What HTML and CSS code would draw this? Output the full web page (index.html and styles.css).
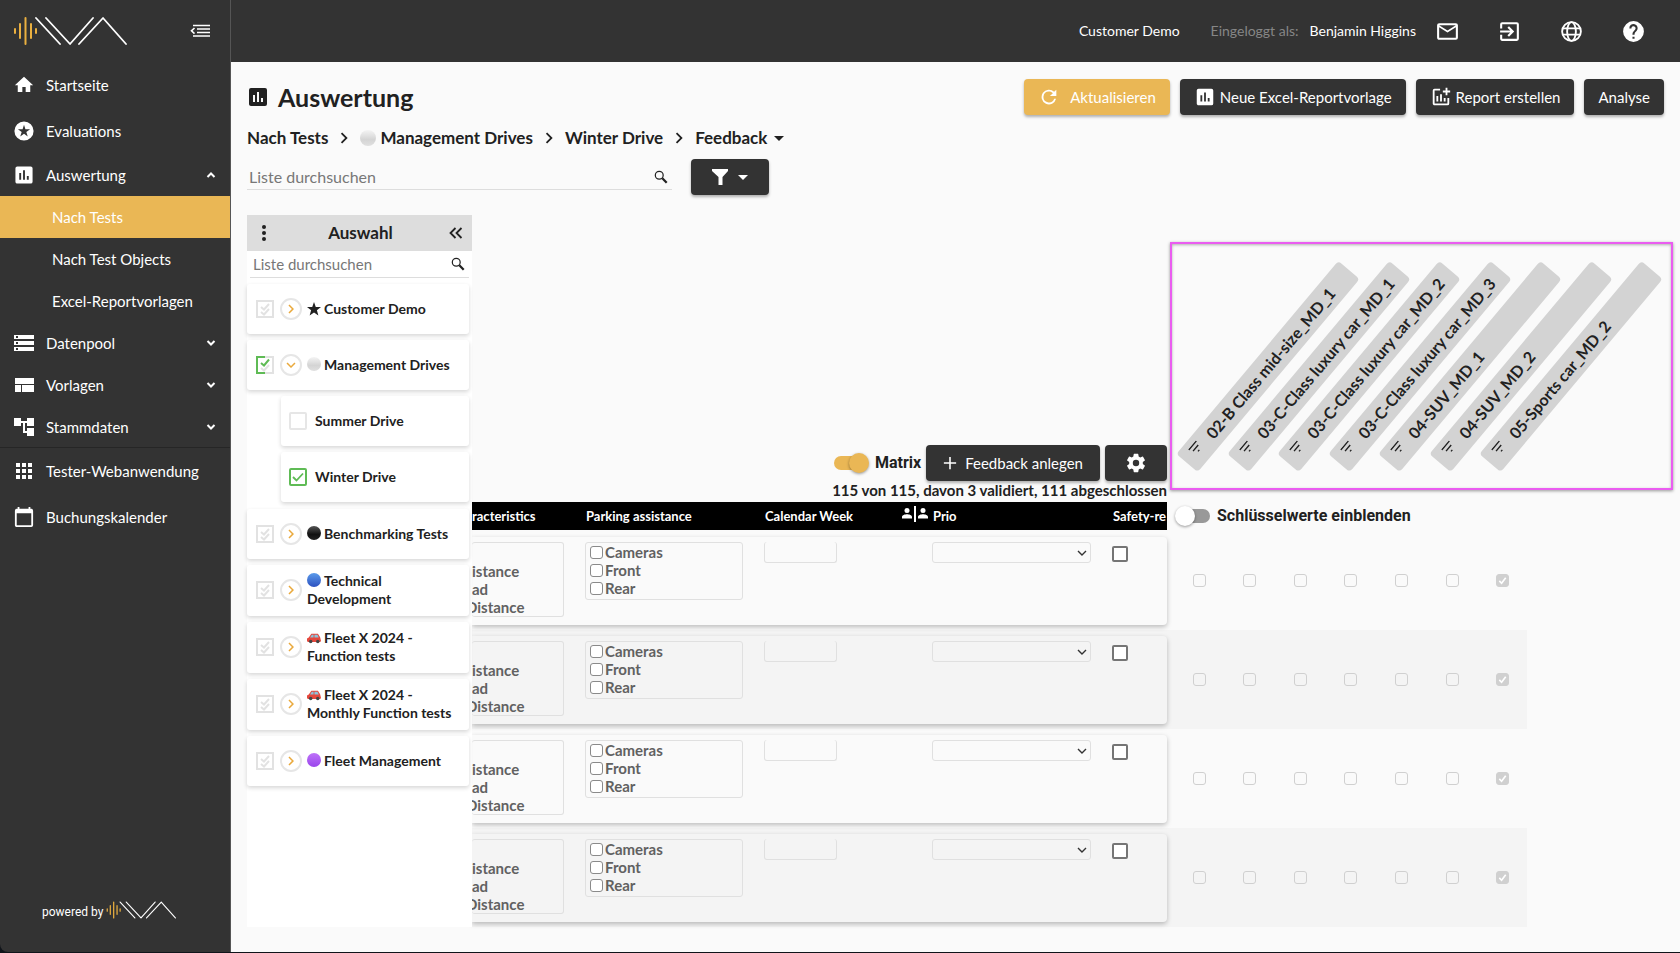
FILE: index.html
```html
<!DOCTYPE html>
<html lang="de">
<head>
<meta charset="utf-8">
<title>Auswertung</title>
<link rel="stylesheet" href="styles.css">
</head>
<body>
<svg class="defs" aria-hidden="true">
  <symbol id="logo" viewBox="0 0 114 30">
    <g fill="none" stroke="#eab040" stroke-width="2" stroke-linecap="round"><path d="M2 13v4M7 8v14M12.500 2v26M18 8v14M23 13v4"/></g>
    <g fill="none" stroke="#fff" stroke-width="1.800" stroke-linecap="round" stroke-linejoin="round"><path d="M23 2l24 26M33 2l24 26L80 2M66 28L90 2l23 26"/></g>
  </symbol>
  <symbol id="chart" viewBox="0 0 24 24"><path fill-rule="evenodd" d="M19 3H5a2 2 0 0 0-2 2v14c0 1.100.9 2 2 2h14a2 2 0 0 0 2-2V5a2 2 0 0 0-2-2zM9 17H7v-7h2zm4 0h-2V7h2zm4 0h-2v-4h2z"/></symbol>
  <symbol id="next" viewBox="0 0 24 24"><path d="M10 6L8.600 7.400 13.200 12l-4.600 4.600L10 18l6-6z"/></symbol>
  <symbol id="down" viewBox="0 0 24 24"><path d="M7.400 8.600L12 13.200l4.600-4.600L18 10l-6 6-6-6z"/></symbol>
  <symbol id="bolddown" viewBox="0 0 12 12"><path d="M2.500 4L6 7.500 9.500 4" fill="none" stroke="currentColor" stroke-width="2"/></symbol>
  <symbol id="search" viewBox="0 0 16 16"><g fill="none" stroke="currentColor"><circle cx="6" cy="6" r="4.500" stroke-width="1.400"/><path d="M9.500 9.500L14.500 14.500" stroke-width="2.600"/></g></symbol>
  <symbol id="multi" viewBox="0 0 20 20"><g fill="none" stroke="#e2e2e2" stroke-width="2"><path d="M2 2h16v16H2z"/><path d="M6 8l3 2.500L14 5M6 13l3 2.500L14 10"/></g></symbol>
  <symbol id="partial" viewBox="0 0 20 20"><g fill="none" stroke="#e2e2e2" stroke-width="2"><path d="M10 2h8v16h-8M6 13l3 2.500L14 10"/></g><g fill="none" stroke="#5fbb55" stroke-width="2"><path d="M10 2H2v16h8"/><path d="M6 8l3 2.500L14 4.500"/></g></symbol>
  <symbol id="car" viewBox="0 0 16 16"><path d="M0 8.500l2-1.200L5 3h7.500L15 7l1 4.500-1 1H1L0 11.500z" fill="#e5473c"/><path d="M5.500 4.200h2v3.300H3.500zM8.500 4.200h3.400l1.600 3.300h-5z" fill="#8cc4dc"/><circle cx="4.200" cy="12" r="2" fill="#444"/><circle cx="12.300" cy="12" r="2" fill="#444"/></symbol>
  <symbol id="sort" viewBox="0 0 12 10"><path d="M0 1h12M2 5h8M5 9h2" stroke="currentColor" stroke-width="1.400"/></symbol>
</svg>
<div class="app">
  <aside class="sidebar">
    <div class="brand">
      <svg class="logo"><use href="#logo"/></svg>
      <button class="icon-button" aria-label="Menü einklappen"><svg class="collapse" viewBox="0 0 20 14"><path d="M3 1.500h17M7 5h13M7 8.500h13M3 12h17M4.500 4L1.500 6.800l3 2.800" fill="none" stroke="currentColor" stroke-width="1.600"/></svg></button>
    </div>
    <nav>
      <a class="nav tall" href="#"><svg viewBox="0 0 24 24"><path d="M10 20.500v-6h4v6h5.500v-8.300H23L12 2 1 12.200h3.500v8.300z"/></svg>Startseite</a>
      <a class="nav tall" href="#"><svg viewBox="0 0 24 24"><path fill-rule="evenodd" d="M12 .5a11.500 11.500 0 1 0 0 23 11.500 11.500 0 0 0 0-23zm4.500 18L12 15.200l-4.500 3.300 1.700-5.300-4.500-3.300h5.600L12 4.500l1.700 5.400h5.600l-4.500 3.300z"/></svg>Evaluations</a>
      <a class="nav group" href="#"><svg viewBox="1.500 1.500 21 21"><use href="#chart" width="24" height="24"/></svg>Auswertung<svg class="arrow up"><use href="#bolddown"/></svg></a>
      <a class="nav sub active" href="#">Nach Tests</a>
      <a class="nav sub" href="#">Nach Test Objects</a>
      <a class="nav sub" href="#">Excel-Reportvorlagen</a>
      <a class="nav group" href="#"><svg viewBox="2 2 20 20"><path fill-rule="evenodd" d="M2 20h20v-4H2zm2-3h2v2H4zM2 4v4h20V4zm4 3H4V5h2zm-4 7h20v-4H2zm2-3h2v2H4z"/></svg>Datenpool<svg class="arrow"><use href="#bolddown"/></svg></a>
      <a class="nav group" href="#"><svg viewBox="2 2 20 20"><path d="M3 5h19v6H3zM3 12h6v7H3zM10 12h12v7H10z"/></svg>Vorlagen<svg class="arrow"><use href="#bolddown"/></svg></a>
      <a class="nav group last" href="#"><svg viewBox="2 2 20 20"><path d="M22 11V3h-7v3H9V3H2v8h7V8h2v10h4v3h7v-8h-7v3h-2V8h2v3z"/></svg>Stammdaten<svg class="arrow"><use href="#bolddown"/></svg></a>
      <a class="nav tall" href="#"><svg viewBox="2 2 20 20"><path d="M4 4h4v4H4zM10 4h4v4h-4zM16 4h4v4h-4zM4 10h4v4H4zM10 10h4v4h-4zM16 10h4v4h-4zM4 16h4v4H4zM10 16h4v4h-4zM16 16h4v4h-4z"/></svg>Tester-Webanwendung</a>
      <a class="nav tall" href="#"><svg viewBox="2 1 20 22"><path fill-rule="evenodd" d="M20 3h-1V1h-2v2H7V1H5v2H4a2 2 0 0 0-2 2v16c0 1.100.9 2 2 2h16a2 2 0 0 0 2-2V5a2 2 0 0 0-2-2zm0 18H4V8h16z"/></svg>Buchungskalender</a>
    </nav>
    <div class="powered">powered by <svg class="logo-small"><use href="#logo"/></svg></div>
  </aside>

  <div class="page">
    <header class="topbar">
      <span class="customer">Customer Demo</span>
      <span class="login">Eingeloggt als:</span>
      <span class="user">Benjamin Higgins</span>
      <button class="icon-button" aria-label="Nachrichten"><svg viewBox="0 0 24 24"><path fill-rule="evenodd" d="M22 6a2 2 0 0 0-2-2H4a2 2 0 0 0-2 2v12c0 1.100.9 2 2 2h16a2 2 0 0 0 2-2zm-2 0l-8 5-8-5zm0 12H4V8l8 5 8-5z"/></svg></button>
      <button class="icon-button" aria-label="Abmelden"><svg viewBox="0 0 24 24"><path d="M10 15.600L11.500 17l5-5-5-5L10 8.400l2.700 2.600H3v2h9.700zM19 3H5a2 2 0 0 0-2 2v4h2V5h14v14H5v-4H3v4c0 1.100.9 2 2 2h14a2 2 0 0 0 2-2V5a2 2 0 0 0-2-2z"/></svg></button>
      <button class="icon-button" aria-label="Sprache"><svg viewBox="0 0 24 24"><g fill="none" stroke="currentColor" stroke-width="1.800"><circle cx="12" cy="12" r="9"/><ellipse cx="12" cy="12" rx="4.200" ry="9"/><path d="M3.500 9h17M3.500 15h17"/></g></svg></button>
      <button class="icon-button" aria-label="Hilfe"><svg viewBox="0 0 24 24"><path d="M12 2a10 10 0 1 0 0 20 10 10 0 0 0 0-20zm1 17h-2v-2h2zm2.100-7.700l-.9.900C13.400 12.900 13 13.500 13 15h-2v-.5c0-1.100.4-2.100 1.200-2.800l1.200-1.300A2 2 0 1 0 10 9H8a4 4 0 1 1 7.100 2.300z"/></svg></button>
    </header>

    <main class="content">
      <div class="title-row">
        <svg class="title-icon" viewBox="3 3 18 18"><use href="#chart" width="24" height="24"/></svg>
        <h1>Auswertung</h1>
        <div class="actions">
          <button class="btn primary"><svg viewBox="0 0 24 24"><path d="M17.600 6.400A8 8 0 1 0 19.700 14h-2.100A6 6 0 1 1 12 6c1.700 0 3.100.7 4.200 1.800L13 11h7V4z"/></svg>Aktualisieren</button>
          <button class="btn"><svg viewBox="0 0 24 24"><use href="#chart"/></svg>Neue Excel-Reportvorlage</button>
          <button class="btn"><svg viewBox="0 0 24 24"><path d="M22 5v2h-3v3h-2V7h-3V5h3V2h2v3zM19 19H5V5h6V3H5a2 2 0 0 0-2 2v14c0 1.100.9 2 2 2h14a2 2 0 0 0 2-2v-6h-2zM15 17v-4h2v4zM11 17V9h2v8zM9 17H7v-6h2z"/></svg>Report erstellen</button>
          <button class="btn">Analyse</button>
        </div>
      </div>

      <nav class="crumbs">
        <a href="#">Nach Tests</a><svg><use href="#next"/></svg>
        <a href="#"><i class="dot white"></i>Management Drives</a><svg><use href="#next"/></svg>
        <a href="#">Winter Drive</a><svg><use href="#next"/></svg>
        <button class="crumb-menu">Feedback<i class="caret"></i></button>
      </nav>

      <div class="filters">
        <label class="search"><input type="text" placeholder="Liste durchsuchen" aria-label="Liste durchsuchen"><svg><use href="#search"/></svg></label>
        <button class="btn filter" aria-label="Filter"><svg viewBox="0 0 16 18"><path d="M0 1h16v2l-5.500 6v8h-4V9L0 3z"/></svg><i class="caret"></i></button>
      </div>

      <div class="work">
        <section class="panel">
          <header class="panel-head">
            <button class="icon-button" aria-label="Optionen"><svg class="dots" viewBox="0 0 4 16"><circle cx="2" cy="2" r="2"/><circle cx="2" cy="8" r="2"/><circle cx="2" cy="14" r="2"/></svg></button>
            <h2>Auswahl</h2>
            <button class="icon-button" aria-label="Einklappen"><svg class="back" viewBox="0 0 14 12"><path d="M6.500 1l-5 5 5 5M12.500 1l-5 5 5 5" fill="none" stroke="currentColor" stroke-width="1.800"/></svg></button>
          </header>
          <label class="search small"><input type="text" placeholder="Liste durchsuchen" aria-label="Auswahl durchsuchen"><svg><use href="#search"/></svg></label>
          <ul class="tree">
            <li class="node"><svg class="tick"><use href="#multi"/></svg><button class="expand" aria-label="Öffnen"><svg><use href="#next"/></svg></button><span><svg class="emoji" viewBox="0 0 16 16"><path d="M8 0l2 5.700 6 .1-4.700 3.700L13 15.300 8 12l-5 3.300 1.700-5.800L0 5.800l6-.1z"/></svg>Customer Demo</span></li>
            <li class="node"><svg class="tick"><use href="#partial"/></svg><button class="expand" aria-label="Schließen"><svg><use href="#down"/></svg></button><span><i class="dot white"></i>Management Drives</span></li>
            <li class="node child"><input class="box" type="checkbox" id="summer"><label for="summer">Summer Drive</label></li>
            <li class="node child end"><input class="box" type="checkbox" id="winter" checked><label for="winter">Winter Drive</label></li>
            <li class="node"><svg class="tick"><use href="#multi"/></svg><button class="expand" aria-label="Öffnen"><svg><use href="#next"/></svg></button><span><i class="dot black"></i>Benchmarking Tests</span></li>
            <li class="node"><svg class="tick"><use href="#multi"/></svg><button class="expand" aria-label="Öffnen"><svg><use href="#next"/></svg></button><span><i class="dot blue"></i>Technical<br>Development</span></li>
            <li class="node"><svg class="tick"><use href="#multi"/></svg><button class="expand" aria-label="Öffnen"><svg><use href="#next"/></svg></button><span><svg class="emoji"><use href="#car"/></svg>Fleet X 2024 -<br>Function tests</span></li>
            <li class="node"><svg class="tick"><use href="#multi"/></svg><button class="expand" aria-label="Öffnen"><svg><use href="#next"/></svg></button><span><svg class="emoji"><use href="#car"/></svg>Fleet X 2024 -<br>Monthly Function tests</span></li>
            <li class="node"><svg class="tick"><use href="#multi"/></svg><button class="expand" aria-label="Öffnen"><svg><use href="#next"/></svg></button><span><i class="dot purple"></i>Fleet Management</span></li>
          </ul>
        </section>

        <section class="data">
          <div class="data-top">
            <div class="controls">
              <div class="control-row">
                <label class="toggle"><input type="checkbox" checked>Matrix</label>
                <button class="btn add"><svg viewBox="0 0 16 16"><path d="M8 1v14M1 8h14" stroke="currentColor" stroke-width="1.800"/></svg>Feedback anlegen</button>
                <button class="btn gear" aria-label="Einstellungen"><svg viewBox="0 0 24 24"><path fill-rule="evenodd" d="M19.400 13a7.500 7.500 0 0 0 0-2l2.200-1.600a.5.5 0 0 0 .1-.7l-2-3.500a.5.5 0 0 0-.6-.2l-2.500 1a7.300 7.300 0 0 0-1.700-1l-.4-2.600a.5.500 0 0 0-.5-.4h-4a.5.500 0 0 0-.5.400L9.100 5a7.300 7.300 0 0 0-1.700 1l-2.500-1a.5.500 0 0 0-.6.200l-2 3.500a.5.500 0 0 0 .1.700L4.600 11a7.500 7.500 0 0 0 0 2l-2.200 1.600a.5.500 0 0 0-.1.700l2 3.500c.1.200.4.300.6.200l2.500-1a7.300 7.300 0 0 0 1.700 1l.4 2.600c0 .2.200.4.500.4h4c.300 0 .5-.2.500-.4l.4-2.600a7.300 7.300 0 0 0 1.700-1l2.500 1c.2.100.5 0 .6-.2l2-3.500a.5.500 0 0 0-.1-.7zM12 15.500a3.500 3.500 0 1 1 0-7 3.500 3.500 0 0 1 0 7z"/></svg></button>
              </div>
              <p class="count">115 von 115, davon 3 validiert, 111 abgeschlossen</p>
            </div>
            <div class="vehicles">
              <ul class="matrix">
                <li><span><svg><use href="#sort"/></svg>02-B Class mid-size_MD_1</span></li>
                <li><span><svg><use href="#sort"/></svg>03-C-Class luxury car_MD_1</span></li>
                <li><span><svg><use href="#sort"/></svg>03-C-Class luxury car_MD_2</span></li>
                <li><span><svg><use href="#sort"/></svg>03-C-Class luxury car_MD_3</span></li>
                <li><span><svg><use href="#sort"/></svg>04-SUV_MD_1</span></li>
                <li><span><svg><use href="#sort"/></svg>04-SUV_MD_2</span></li>
                <li><span><svg><use href="#sort"/></svg>05-Sports car_MD_2</span></li>
              </ul>
            </div>
          </div>
          <table>
            <thead>
              <tr>
                <th>racteristics</th><th>Parking assistance</th>
                <th class="split">Calendar Week<svg viewBox="0 0 26 16"><path d="M12 0h2v16h-2zM0 12.500v-1.500c0-2 3-2.800 5-2.800s5 .8 5 2.800v1.500zM16 12.500v-1.500c0-2 3-2.800 5-2.800s5 .8 5 2.800v1.500z"/><circle cx="5" cy="4.500" r="2.500"/><circle cx="21" cy="4.500" r="2.500"/></svg></th>
                <th>Prio</th><th>Safety-re</th>
                <th class="keys"><label class="toggle"><input type="checkbox">Schlüsselwerte einblenden</label></th>
              </tr>
            </thead>
            <tbody>
              <tr>
                <td><ul class="group-box cut"><li>istance</li><li>ad</li><li>Distance</li></ul></td>
                <td><div class="group-box"><label><input type="checkbox">Cameras</label><label><input type="checkbox">Front</label><label><input type="checkbox">Rear</label></div></td>
                <td><input class="week" type="text" aria-label="Calendar Week"></td>
                <td><select aria-label="Prio"><option></option></select></td>
                <td><input class="safety" type="checkbox" aria-label="Safety"></td>
                <td class="matrix"><input type="checkbox" disabled aria-label="02-B"><input type="checkbox" disabled aria-label="03-C 1"><input type="checkbox" disabled aria-label="03-C 2"><input type="checkbox" disabled aria-label="03-C 3"><input type="checkbox" disabled aria-label="04 1"><input type="checkbox" disabled aria-label="04 2"><input type="checkbox" disabled checked aria-label="05 2"></td>
              </tr>
              <tr>
                <td><ul class="group-box cut"><li>istance</li><li>ad</li><li>Distance</li></ul></td>
                <td><div class="group-box"><label><input type="checkbox">Cameras</label><label><input type="checkbox">Front</label><label><input type="checkbox">Rear</label></div></td>
                <td><input class="week" type="text" aria-label="Calendar Week"></td>
                <td><select aria-label="Prio"><option></option></select></td>
                <td><input class="safety" type="checkbox" aria-label="Safety"></td>
                <td class="matrix"><input type="checkbox" disabled aria-label="02-B"><input type="checkbox" disabled aria-label="03-C 1"><input type="checkbox" disabled aria-label="03-C 2"><input type="checkbox" disabled aria-label="03-C 3"><input type="checkbox" disabled aria-label="04 1"><input type="checkbox" disabled aria-label="04 2"><input type="checkbox" disabled checked aria-label="05 2"></td>
              </tr>
              <tr>
                <td><ul class="group-box cut"><li>istance</li><li>ad</li><li>Distance</li></ul></td>
                <td><div class="group-box"><label><input type="checkbox">Cameras</label><label><input type="checkbox">Front</label><label><input type="checkbox">Rear</label></div></td>
                <td><input class="week" type="text" aria-label="Calendar Week"></td>
                <td><select aria-label="Prio"><option></option></select></td>
                <td><input class="safety" type="checkbox" aria-label="Safety"></td>
                <td class="matrix"><input type="checkbox" disabled aria-label="02-B"><input type="checkbox" disabled aria-label="03-C 1"><input type="checkbox" disabled aria-label="03-C 2"><input type="checkbox" disabled aria-label="03-C 3"><input type="checkbox" disabled aria-label="04 1"><input type="checkbox" disabled aria-label="04 2"><input type="checkbox" disabled checked aria-label="05 2"></td>
              </tr>
              <tr>
                <td><ul class="group-box cut"><li>istance</li><li>ad</li><li>Distance</li></ul></td>
                <td><div class="group-box"><label><input type="checkbox">Cameras</label><label><input type="checkbox">Front</label><label><input type="checkbox">Rear</label></div></td>
                <td><input class="week" type="text" aria-label="Calendar Week"></td>
                <td><select aria-label="Prio"><option></option></select></td>
                <td><input class="safety" type="checkbox" aria-label="Safety"></td>
                <td class="matrix"><input type="checkbox" disabled aria-label="02-B"><input type="checkbox" disabled aria-label="03-C 1"><input type="checkbox" disabled aria-label="03-C 2"><input type="checkbox" disabled aria-label="03-C 3"><input type="checkbox" disabled aria-label="04 1"><input type="checkbox" disabled aria-label="04 2"><input type="checkbox" disabled checked aria-label="05 2"></td>
              </tr>
            </tbody>
          </table>
        </section>
      </div>
    </main>
  </div>
</div>
</body>
</html>
```
FILE: styles.css
```css
* { box-sizing: border-box; }
body {
  margin: 0;
  background: #10141a;
  color: #212121;
  font: 15px/20px Lato, "Open Sans", sans-serif;
}
h1, h2, p, ul { margin: 0; padding: 0; }
ul { list-style: none; }
a { color: inherit; text-decoration: none; }
button, input, select { font: inherit; color: inherit; margin: 0; }
svg { fill: currentColor; flex: none; }
.defs { position: absolute; width: 0; height: 0; }
.app { display: flex; min-height: 100vh; padding-bottom: 1px; }

/* Sidebar */
.sidebar {
  display: flex;
  flex-direction: column;
  width: 231px;
  flex: none;
  background: #333;
  border-right: 1px solid #555;
  border-bottom-left-radius: 8px;
  color: #fff;
}
.brand {
  display: flex;
  align-items: center;
  justify-content: space-between;
  height: 62px;
  padding: 0 20px 0 13px;
}
.logo { width: 114px; height: 30px; }
.collapse { width: 20px; height: 14px; }
.icon-button { display: flex; padding: 0; border: 0; background: none; }
.nav { display: flex; align-items: center; height: 42px; gap: 12px; padding: 0 13px 0 14px; }
.nav svg { width: 20px; height: 20px; }
.nav .arrow { width: 12px; height: 12px; margin-left: auto; }
.nav .up { transform: rotate(180deg); }
.nav.tall { height: 46px; }
.nav.sub { padding-left: 52px; }
.active { background: #eab755; }
.last { border-bottom: 1px solid #262626; }
.powered {
  display: flex;
  align-items: center;
  gap: 3px;
  margin-top: auto;
  padding: 0 0 28px 42px;
  font: 12px/24px Roboto, sans-serif;
}
.logo-small { width: 70px; height: 20px; margin-bottom: 4px; }

/* Top bar */
.page { flex: 1; min-width: 0; background: #fafafa; }
.topbar {
  display: flex;
  align-items: center;
  justify-content: flex-end;
  height: 62px;
  padding-right: 34px;
  background: #333;
  color: #fff;
  font-size: 14px;
}
.topbar .icon-button { margin-left: 37px; }
.topbar .icon-button svg { width: 25px; height: 25px; }
.topbar .user + .icon-button { margin-left: 19px; }
.login { margin: 0 11px 0 31px; color: #868686; }

/* Page head */
.content { padding: 17px 7px 25px 16px; }
.title-row { display: flex; align-items: center; height: 36px; padding: 0 9px 0 2px; }
.title-icon { width: 18px; height: 18px; }
h1 { margin-left: 11px; font-size: 25px; line-height: 34px; }
.actions { display: flex; gap: 10px; margin-left: auto; }
.btn {
  display: flex;
  align-items: center;
  justify-content: center;
  gap: 4px;
  height: 36px;
  padding: 0 14px;
  border: 0;
  border-radius: 4px;
  background: #333;
  color: #fff;
  box-shadow: 0 2px 3px rgba(0, 0, 0, .3);
  white-space: nowrap;
}
.btn svg { width: 22px; height: 22px; }
.primary { gap: 10px; background: #eab755; }
.crumbs { display: flex; align-items: center; height: 24px; margin-top: 11px; font-size: 17px; font-weight: 700; }
.crumbs > svg { width: 22px; height: 22px; margin: 0 5px; }
.crumbs a { display: flex; align-items: center; }
.crumbs .dot { width: 16px; height: 16px; margin-right: 4px; }
.crumb-menu { display: flex; align-items: center; gap: 7px; padding: 0; border: 0; background: none; }
.caret { border: 5px solid transparent; border-top-color: currentColor; border-bottom: 0; }
.filters { display: flex; align-items: center; gap: 19px; height: 36px; margin-top: 9px; }
.search { display: flex; align-items: center; width: 425px; height: 25px; padding: 0 4px 0 2px; border-bottom: 1px solid #ddd; font-size: 16px; }
.search input { flex: 1; min-width: 0; padding: 0; border: 0; outline: 0; background: none; }
.search input::placeholder { color: #777; opacity: 1; }
.search svg { width: 14px; height: 14px; }
.filter { width: 78px; gap: 10px; }
.filter svg { width: 16px; height: 18px; }

/* Emoji-like markers */
.dot { display: inline-block; width: 14px; height: 14px; margin-right: 3px; border-radius: 50%; vertical-align: -1px; }
.white { background: linear-gradient(#f4f4f4, #d4d4d4 60%, #e0e0e0); }
.black { background: linear-gradient(#555, #111 60%, #222); }
.blue { background: linear-gradient(#5b9bea, #2b50c0); }
.purple { background: linear-gradient(#bd72f8, #9a45ec); }
.emoji { width: 14px; height: 14px; margin-right: 3px; vertical-align: -2px; }

/* Selection panel */
.work { display: flex; margin-top: 20px; }
.panel { position: relative; z-index: 1; width: 225px; flex: none; background: #fff; }
.panel-head { display: flex; align-items: center; justify-content: space-between; height: 36px; padding: 0 9px 0 15px; background: #ddd; }
.panel-head h2 { padding-left: 6px; font-size: 17px; }
.dots { width: 4px; height: 16px; }
.back { width: 14px; height: 12px; }
.small { width: auto; height: 27px; margin: 0 3px; padding: 0 4px 0 3px; font-size: 15px; }
.tree { display: flex; flex-direction: column; gap: 6px; padding: 6px 3px 0 0; font-size: 14px; font-weight: 700; }
.node {
  display: flex;
  align-items: center;
  min-height: 50px;
  gap: 5px;
  padding: 7px 0 8px 8px;
  border-radius: 3px;
  background: #fff;
  box-shadow: 0 2px 4px rgba(0, 0, 0, .16);
  line-height: 18px;
}
.tick { width: 20px; height: 20px; }
.expand { display: flex; padding: 0; border: 2px solid #e6e6e6; border-radius: 50%; background: #fff; color: #eaa93c; }
.expand svg { width: 18px; height: 18px; }
.child { margin-left: 34px; gap: 8px; }
.end { margin-bottom: 1px; }
.box { appearance: none; width: 18px; height: 18px; border: 2px solid #e6e6e6; border-radius: 2px; }
.box:checked {
  border-color: #5fbb55;
  background: url("data:image/svg+xml,%3Csvg xmlns='http://www.w3.org/2000/svg' viewBox='0 0 14 14'%3E%3Cpath d='M2 7l3.500 3.500L12 3.500' fill='none' stroke='%235fbb55' stroke-width='1.800'/%3E%3C/svg%3E");
}

/* Data area */
.data { flex: 1; min-width: 0; }
.data-top { display: flex; align-items: flex-end; padding-top: 27px; }
.controls { flex: 1; min-width: 0; }
.control-row { display: flex; justify-content: flex-end; gap: 5px; }
.toggle { display: flex; align-items: center; gap: 9px; font: 700 16px/20px Roboto, sans-serif; }
.toggle input { position: relative; appearance: none; width: 32px; height: 14px; border-radius: 7px; background: #999; }
.toggle input::after {
  position: absolute;
  top: -3px;
  left: -3px;
  width: 20px;
  height: 20px;
  border-radius: 50%;
  background: #fff;
  box-shadow: 0 1px 3px rgba(0, 0, 0, .4);
  content: "";
}
.toggle input:checked { background: #eab755; }
.toggle input:checked::after { left: 15px; background: #eab755; }
.add { gap: 8px; padding: 0 17px; }
.add svg { width: 14px; height: 14px; }
.gear { width: 62px; }
.count { height: 21px; font-weight: 700; line-height: 18px; text-align: right; white-space: nowrap; }
.vehicles {
  width: 503px;
  height: 248px;
  margin: 0 0 12px 3px;
  border: 2px solid #ea5cf0;
  box-shadow: 0 1px 3px rgba(0, 0, 0, .4), inset 0 1px 3px rgba(0, 0, 0, .3);
}
.matrix { display: grid; grid-template-columns: repeat(7, 1fr); width: 354px; }
.vehicles .matrix { height: 100%; }
.vehicles li { position: relative; }
.vehicles span {
  position: absolute;
  bottom: 11px;
  left: 15px;
  display: flex;
  align-items: center;
  gap: 12px;
  width: 252px;
  height: 28px;
  padding-left: 11px;
  border-radius: 4px;
  background: #d3d3d3;
  font-size: 16px;
  font-weight: 700;
  white-space: nowrap;
  transform: rotate(-50deg);
  transform-origin: left center;
}
.vehicles svg { width: 12px; height: 10px; margin-bottom: 6px; }

table, thead, tbody { display: block; }
tr {
  display: grid;
  grid-template-columns: 113fr 179fr 168fr 180fr 55fr 360px;
  margin-right: 146px;
}
th, td { min-width: 0; padding: 0; }
th {
  height: 28px;
  margin-bottom: 1px;
  overflow: hidden;
  background: #000;
  color: #fff;
  font-size: 13px;
  line-height: 28px;
  text-align: left;
  white-space: nowrap;
}
th:nth-child(n + 2) { padding-left: 1px; }
th.split { display: flex; justify-content: space-between; padding: 4px 4px 0 1px; line-height: 20px; }
.split svg { width: 26px; height: 16px; }
th.keys { padding: 4px 0 0 11px; overflow: visible; background: none; color: #212121; }
.keys .toggle { gap: 7px; }
tbody tr { height: 99px; }
tbody tr:nth-child(even) { background: #f4f4f4; }
tbody tr::before {
  grid-row: 1;
  grid-column: 1 / 6;
  margin: 6px 0 5px;
  border-radius: 0 4px 4px 0;
  box-shadow: 0 2px 5px rgba(0, 0, 0, .25);
  content: "";
}
td { grid-row: 1; padding-top: 11px; color: #616161; font-weight: 700; }
td:nth-child(1) { grid-column: 1; overflow: hidden; }
td:nth-child(2) { grid-column: 2; }
td:nth-child(3) { grid-column: 3; }
td:nth-child(4) { grid-column: 4; }
td:nth-child(5) { grid-column: 5; }
td.matrix { grid-column: 6; align-items: center; justify-items: center; width: 354px; margin-left: 7px; padding: 0; }
.group-box { width: calc(100% - 21px); padding: 0 4px 2px; border: 1px solid #e0e0e0; border-radius: 3px; line-height: 18px; }
.group-box label { display: flex; align-items: center; gap: 2px; height: 18px; }
.group-box input, .matrix input { appearance: none; width: 13px; height: 13px; border: 1px solid #8a8a8a; border-radius: 3px; background: #fff; }
.group-box.cut { padding: 19px 0 0; border-left: 0; }
.cut li { height: 18px; }
.cut li:last-child { margin-left: -6px; }
.matrix input { border-color: #d0d0d0; background: none; }
.matrix input:checked {
  background: #d0d0d0 url("data:image/svg+xml,%3Csvg xmlns='http://www.w3.org/2000/svg' viewBox='0 0 12 12'%3E%3Cpath d='M2.500 6.500L5 9l4.500-6' fill='none' stroke='white' stroke-width='1.800'/%3E%3C/svg%3E");
}
.week, select { display: block; height: 21px; border: 1px solid #e0e0e0; border-radius: 3px; background: transparent; }
.week { width: 73px; border-top: 0; }
select {
  appearance: none;
  width: calc(100% - 21px);
  background: url("data:image/svg+xml,%3Csvg xmlns='http://www.w3.org/2000/svg' viewBox='0 0 10 10'%3E%3Cpath d='M1 3l4 4 4-4' fill='none' stroke='%23333' stroke-width='1.400'/%3E%3C/svg%3E") no-repeat right 3px center / 10px;
}
.safety { appearance: none; display: block; width: 16px; height: 16px; margin-top: 4px; border: 2px solid #757575; border-radius: 2px; background: #fff; }
```
